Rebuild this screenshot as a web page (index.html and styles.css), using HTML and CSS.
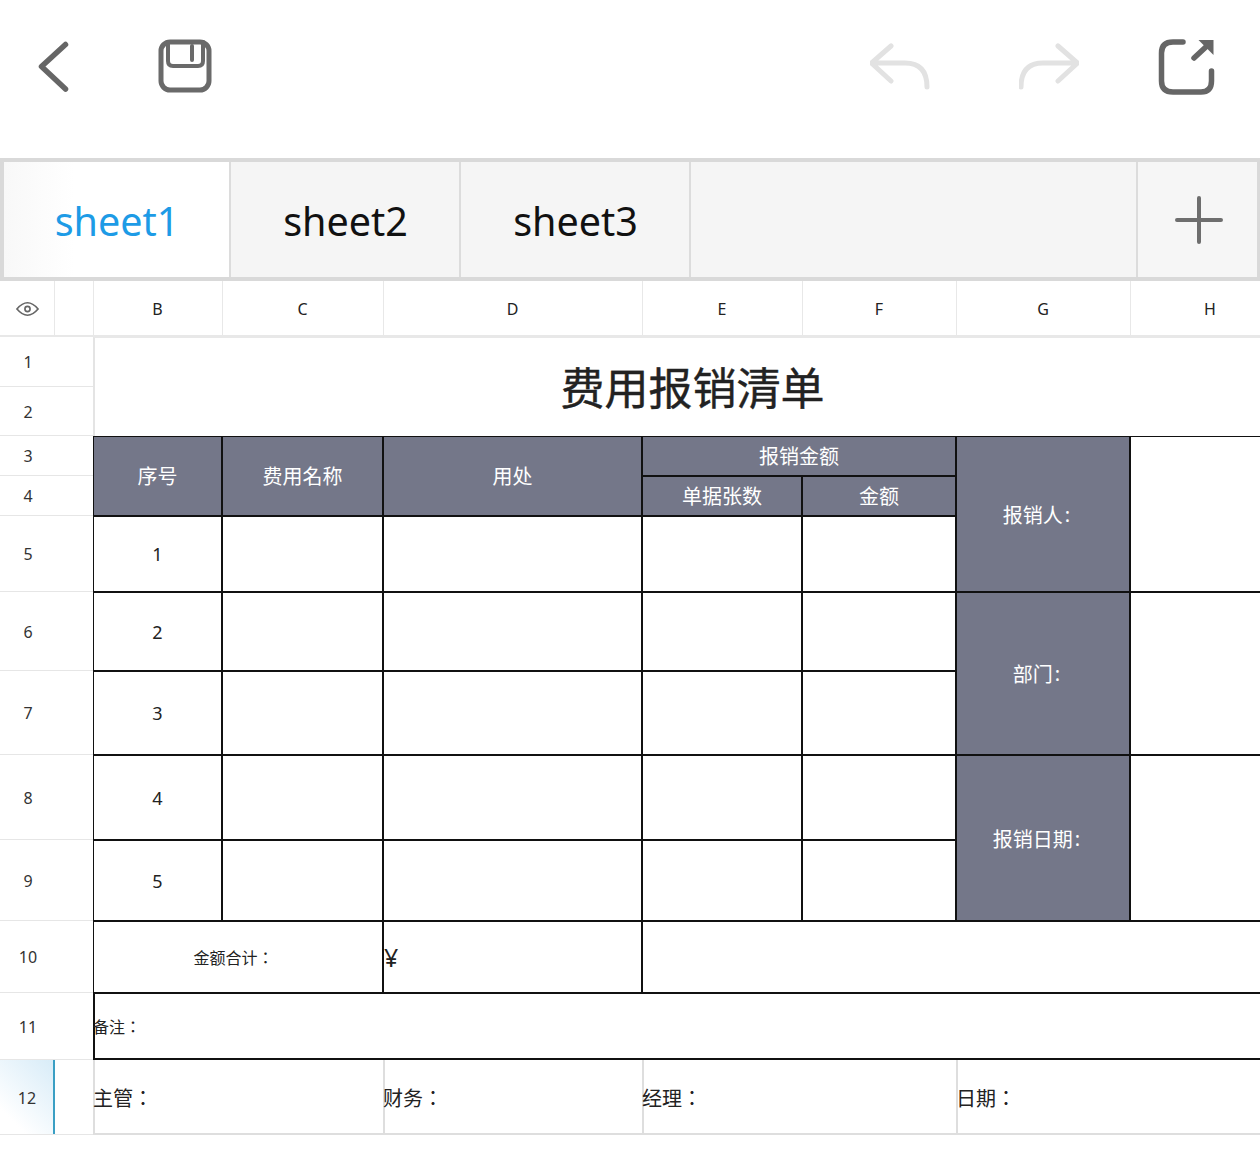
FILE: index.html
```html
<!DOCTYPE html>
<html lang="zh-Hant">
<head>
<meta charset="utf-8">
<title>费用报销清单</title>
<link rel="stylesheet" href="styles.css">
</head>
<body>
<div class="page">
  <header class="toolbar">
    <svg class="icon icon-back" viewBox="24 36 60 60"><path class="stroke-dark bold" d="M65.5 44.500 41.500 66.500 65.500 89"/></svg>
    <svg class="icon icon-save" viewBox="155 36 60 60"><rect class="stroke-dark" x="161" y="42" width="48" height="48" rx="9"/><path class="stroke-dark thin" d="M168 42V61q0 5 5 5H198q5 0 5-5V42M192 46V60"/></svg>
    <svg class="icon icon-undo" viewBox="870 36 60 60"><path class="stroke-light" d="M891 46 871.500 63 891 81M871.500 63H905Q927 63 927 87"/></svg>
    <svg class="icon icon-redo" viewBox="1019 36 60 60"><path class="stroke-light" d="M1058 46 1077.500 63 1058 81M1077.500 63H1043Q1021 63 1021 87"/></svg>
    <svg class="icon icon-share" viewBox="1156 36 60 60"><path class="stroke-dark bold" d="M1183 42H1173Q1161.500 42 1161.500 53V81Q1161.500 92 1173 92H1201Q1211.500 92 1211.500 81V71M1194 58 1208 45"/><path class="fill-dark" d="M1198.500 40H1213.500V55Z"/></svg>
  </header>

  <nav class="tabs">
    <div class="tab tab-active">sheet1</div>
    <div class="tab">sheet2</div>
    <div class="tab">sheet3</div>
    <div class="tab tab-fill"></div>
    <div class="tab tab-add">
      <svg class="icon-plus" viewBox="0 0 50 50"><path d="M25 3V47M3 25H47"/></svg>
    </div>
  </nav>

  <main class="sheet">
    <div class="col-head col-eye">
      <svg class="icon-eye" viewBox="0 0 24 16"><path d="M1 8Q12-5 23 8 12 21 1 8Z"/><circle cx="12" cy="8" r="2.700"/></svg>
    </div>
    <div class="col-head"></div>
    <div class="col-head">B</div>
    <div class="col-head">C</div>
    <div class="col-head">D</div>
    <div class="col-head">E</div>
    <div class="col-head">F</div>
    <div class="col-head">G</div>
    <div class="col-head">H</div>

    <div class="rownum"><span class="rownum-label">1</span></div>
    <div class="title cs7 rs2">费用报销清单</div>

    <div class="rownum"><span class="rownum-label">2</span></div>

    <div class="rownum"><span class="rownum-label">3</span></div>
    <div class="cell head rs2">序号</div>
    <div class="cell head rs2">费用名称</div>
    <div class="cell head rs2">用处</div>
    <div class="cell head cs2">报销金额</div>
    <div class="cell head side rs3">报销人<span class="colon">:</span></div>
    <div class="cell open rs3"></div>

    <div class="rownum"><span class="rownum-label">4</span></div>
    <div class="cell head">单据张数</div>
    <div class="cell head">金额</div>

    <div class="rownum"><span class="rownum-label">5</span></div>
    <div class="cell">1</div><div class="cell"></div><div class="cell"></div><div class="cell"></div><div class="cell"></div>

    <div class="rownum"><span class="rownum-label">6</span></div>
    <div class="cell">2</div><div class="cell"></div><div class="cell"></div><div class="cell"></div><div class="cell"></div>
    <div class="cell head side rs2">部门<span class="colon">:</span></div>
    <div class="cell open rs2"></div>

    <div class="rownum"><span class="rownum-label">7</span></div>
    <div class="cell">3</div><div class="cell"></div><div class="cell"></div><div class="cell"></div><div class="cell"></div>

    <div class="rownum"><span class="rownum-label">8</span></div>
    <div class="cell">4</div><div class="cell"></div><div class="cell"></div><div class="cell"></div><div class="cell"></div>
    <div class="cell head side rs2">报销日期<span class="colon">:</span></div>
    <div class="cell open rs2"></div>

    <div class="rownum"><span class="rownum-label">9</span></div>
    <div class="cell">5</div><div class="cell"></div><div class="cell"></div><div class="cell"></div><div class="cell"></div>

    <div class="rownum"><span class="rownum-label">10</span></div>
    <div class="cell small cs2 total">金额合计：</div>
    <div class="cell left yen">¥</div>
    <div class="cell open cs4"></div>

    <div class="rownum"><span class="rownum-label">11</span></div>
    <div class="cell small left open note cs7">备注：</div>

    <div class="rownum"><span class="rownum-label rownum-active">12</span></div>
    <div class="sign cs2">主管：</div>
    <div class="sign">财务：</div>
    <div class="sign cs2">经理：</div>
    <div class="sign cs2">日期：</div>
  </main>
</div>
</body>
</html>
```
FILE: styles.css
```css
* { box-sizing: border-box; }
html, body { margin: 0; padding: 0; background: #fff; }
body { font-family: "Noto Sans", "Noto Sans CJK TC", sans-serif; color: #222; }
.page { width: 1260px; height: 1153px; overflow: hidden; }

.toolbar { height: 158px; display: flex; align-items: flex-start; padding: 36px 0 0 24px; }
.icon { width: 60px; height: 60px; flex: none; }
.icon-save { margin-left: 71px; }
.icon-undo { margin-left: 655px; }
.icon-redo { margin-left: 89px; }
.icon-share { margin-left: 77px; }
.stroke-dark, .stroke-light { fill: none; stroke-linecap: round; stroke-linejoin: round; }
.stroke-dark { stroke: #6a6a6a; stroke-width: 5; }
.stroke-dark.thin { stroke-width: 4; }
.stroke-dark.bold { stroke-width: 5.500; stroke: #666; }
.stroke-light { stroke: #e2e2e2; stroke-width: 5; }
.fill-dark { fill: #666; }

.tabs { height: 123px; display: flex; border: 4px solid #d9d9d9; background: #f5f5f5; }
.tab { width: 230px; flex: none; display: flex; align-items: center; justify-content: center; font-size: 39.500px; color: #111; border-right: 2px solid #dcdcdc; padding: 3px 0 0 1px; }
.tab-active { width: 227px; color: #1d9be6; background: linear-gradient(90deg, #f8f8f8 0, #fff 70px); }
.tab-fill { width: 447px; padding: 0; }
.tab-add { width: 119px; border-right: 0; padding: 0 0 0 2px; background: #f6f6f6; }
.icon-plus { width: 50px; height: 50px; }
.icon-plus path { fill: none; stroke: #6e6e6e; stroke-width: 4; stroke-linecap: round; }

.sheet { width: 1290px; display: grid; grid-template-columns: 54px 39px 129px 161px 259px 160px 154px 174px 160px; grid-template-rows: 56px 50px 49px 40px 40px 76px 79px 84px 85px 81px 72px 67px 75px; }
.col-head { display: flex; align-items: center; justify-content: center; padding: 1px 1px 0 0; font-size: 16px; color: #222; border-left: 1px solid #e8e8e8; border-bottom: 2px solid #e8e8e8; }
.col-eye { border-left: 0; padding: 1px 0 0 1px; }
.icon-eye { width: 23px; height: 16px; }
.icon-eye path, .icon-eye circle { fill: none; stroke: #666; stroke-width: 1.700; }

.rownum { grid-column: span 2; border-bottom: 1px solid #e6e6e6; font-size: 16px; color: #333; }
.rownum-label { width: 55px; height: 100%; padding: 1px 0 0 1px; display: flex; align-items: center; justify-content: center; }
.rownum-active { background: linear-gradient(45deg, #fff 20%, #d8ecf8 100%); border-right: 2px solid #3a9fc4; }

.title { display: flex; align-items: center; justify-content: center; padding-bottom: 2px; font-size: 44px; color: #222; -webkit-text-stroke: .4px #222; border-left: 2px solid #e4e4e4; border-top: 1px solid #e8e8e8; }

.cell { display: flex; align-items: center; justify-content: center; border: 1px solid #111; font-size: 18px; color: #222; min-width: 0; }
.head { background: #747789; color: #fff; font-size: 20px; padding-bottom: 2px; }
.head.side { padding-bottom: 0; }
.colon { margin: 0 13px 0 2px; }
.open { border-right: 0; }
.small { font-size: 16px; }
.total { padding-right: 9px; }
.left { justify-content: flex-start; }
.yen { font-size: 25px; }
.note { border-left-width: 2px; border-bottom-width: 2px; text-indent: -2px; }
.sign { display: flex; align-items: center; font-size: 20px; color: #222; box-shadow: inset 2px 0 #dedede, inset 0 -2px #dedede; }

.cs2 { grid-column: span 2; }
.cs4 { grid-column: span 4; }
.cs7 { grid-column: span 7; }
.rs2 { grid-row: span 2; }
.rs3 { grid-row: span 3; }
```
